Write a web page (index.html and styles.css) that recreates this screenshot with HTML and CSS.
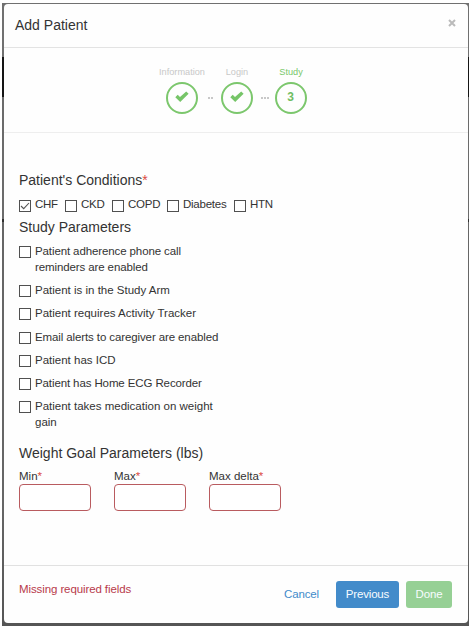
FILE: index.html
```html
<!DOCTYPE html>
<html lang="en">
<head>
<meta charset="utf-8">
<title>Add Patient</title>
<link rel="stylesheet" href="styles.css">
</head>
<body>
<div class="backdrop">
<div class="dialog">
  <header class="header"><h1>Add Patient</h1>
    <svg class="close" width="8" height="8" viewBox="0 0 8 8"><path d="M1 1l6 6M7 1L1 7"/></svg>
  </header>
  <nav class="steps">
    <div class="step info"><span class="step-label">Information</span><span class="circle"><svg width="14" height="12" viewBox="0 0 14 12"><path d="M0.3 6.3L2.7 3.8L5 6L11.2 0.4L13.6 2.8L5.2 11Z"/></svg></span></div>
    <span class="dots two"><i></i><i></i></span>
    <div class="step login"><span class="step-label">Login</span><span class="circle"><svg width="14" height="12" viewBox="0 0 14 12"><path d="M0.3 6.3L2.7 3.8L5 6L11.2 0.4L13.6 2.8L5.2 11Z"/></svg></span></div>
    <span class="dots three"><i></i><i></i><i></i></span>
    <div class="step active"><span class="step-label">Study</span><span class="circle">3</span></div>
  </nav>
  <main class="content">
    <h2>Patient's Conditions<b>*</b></h2>
    <div class="conditions">
      <label class="chf"><span class="box"><svg width="10" height="10" viewBox="0 0 10 10"><path d="M1 5l2.7 2.7L9 2"/></svg></span>CHF</label>
      <label class="ckd"><span class="box"></span>CKD</label>
      <label class="copd"><span class="box"></span>COPD</label>
      <label class="diabetes"><span class="box"></span>Diabetes</label>
      <label><span class="box"></span>HTN</label>
    </div>
    <h2 class="study-title">Study Parameters</h2>
    <div class="parameters">
      <label class="long tight"><span class="box"></span><span>Patient adherence phone call<br>reminders are enabled</span></label>
      <label><span class="box"></span><span>Patient is in the Study Arm</span></label>
      <label><span class="box"></span><span>Patient requires Activity Tracker</span></label>
      <label class="tight"><span class="box"></span><span>Email alerts to caregiver are enabled</span></label>
      <label><span class="box"></span><span>Patient has ICD</span></label>
      <label class="tight"><span class="box"></span><span>Patient has Home ECG Recorder</span></label>
      <label class="long"><span class="box"></span><span>Patient takes medication on weight<br>gain</span></label>
    </div>
    <h2 class="weight-title">Weight Goal Parameters (lbs)</h2>
    <div class="fields">
      <label>Min<b>*</b><span class="input"></span></label>
      <label>Max<b>*</b><span class="input"></span></label>
      <label>Max delta<b>*</b><span class="input"></span></label>
    </div>
  </main>
  <footer class="footer">
    <span class="error">Missing required fields</span>
    <a class="cancel">Cancel</a>
    <span class="button previous">Previous</span>
    <span class="button done">Done</span>
  </footer>
</div>
</div>
</body>
</html>
```
FILE: styles.css
```css
* { box-sizing: border-box; }
body { margin: 0; padding: 3px 0 0 2px; width: 475px; height: 630px; overflow: hidden; background: #fff; font: 11.5px/15px "Liberation Sans", Arial, sans-serif; color: #333; }
.backdrop { width: 467px; height: 623px; padding: 1px 1px 3px 2px; background: linear-gradient(#707070 0 54px, #151515 54px 94px, #6b6b6b 94px 216px, #303030 216px 219px, #666 219px 500px, #555 100%); }
.dialog { width: 464px; height: 619px; background: #fefefe; border-radius: 4px; display: flex; flex-direction: column; }
.header { height: 44px; border-bottom: 1px solid #e3e3e3; display: flex; justify-content: space-between; padding: 12px 12px 0 11px; }
h1, h2 { margin: 0; font-size: 14px; line-height: 18px; font-weight: 400; }
.close { margin-top: 3px; fill: none; stroke: #bbb; stroke-width: 2; }
b { color: #dc4b43; font-weight: 400; }
.steps { height: 85px; border-bottom: 1px solid #eee; display: flex; padding: 17px 0 0 154px; }
.step { display: flex; flex-direction: column; align-items: center; font-size: 9.2px; line-height: 14px; color: #c8c8c8; }
.info { width: 48px; }
.login { width: 32px; }
.step-label { margin-bottom: 3px; white-space: nowrap; }
.active { width: 32px; color: #79c86a; }
.circle { width: 32px; height: 32px; border: 2px solid #7cc76d; border-radius: 50%; display: flex; align-items: center; justify-content: center; color: #70bd62; font-size: 12px; font-weight: 700; padding-bottom: 3px; padding-right: 1px; }
.circle svg { fill: #76c568; }
.dots { display: flex; gap: 1px; padding-top: 32px; }
.dots i { width: 2px; height: 2px; background: #c8c8c8; }
.two { width: 15px; padding-left: 2px; }
.three { width: 22px; padding-left: 8px; }
.content { height: 432px; padding: 38px 15px 0; }
.conditions { display: flex; height: 29px; padding-top: 8px; letter-spacing: -.25px; }
.conditions label { display: flex; gap: 4px; }
.conditions .box { margin-top: 3px; }
.box { width: 12px; height: 12px; border: 1px solid #505050; background: #fff; flex: none; }
.box svg { display: block; fill: none; stroke: #555; stroke-width: 1.1; }
.chf { width: 46px; }
.ckd { width: 47px; }
.copd { width: 55px; }
.diabetes { width: 67px; }
.parameters { margin-top: 8px; height: 195px; letter-spacing: 0; }
.parameters label { display: flex; gap: 4px; height: 23.3px; line-height: 15.5px; }
.parameters .long { height: 39px; }
.parameters .tight { letter-spacing: -.11px; }
.parameters .box { margin-top: 2px; }
.weight-title { margin-top: 5px; }
.fields { display: flex; gap: 23px; padding-top: 7px; line-height: 14px; }
.fields label { width: 72px; }
.input { display: block; height: 27px; margin-top: 1px; border: 1px solid #b95b5f; border-radius: 4px; background: #fff; }
.footer { flex: 1; border-top: 1px solid #e1e1e1; display: flex; padding: 15px 15px 0; }
.error { width: 265px; padding-top: 1px; letter-spacing: -.1px; color: #b83a4b; }
.cancel { width: 52px; padding-top: 6px; color: #428bca; letter-spacing: -.15px; }
.button { height: 27px; border-radius: 3px; color: #f8fcff; text-align: center; line-height: 27px; letter-spacing: -.18px; }
.previous { width: 63px; background: #428bca; }
.done { width: 46px; margin-left: 7px; background: #96d095; }
```
